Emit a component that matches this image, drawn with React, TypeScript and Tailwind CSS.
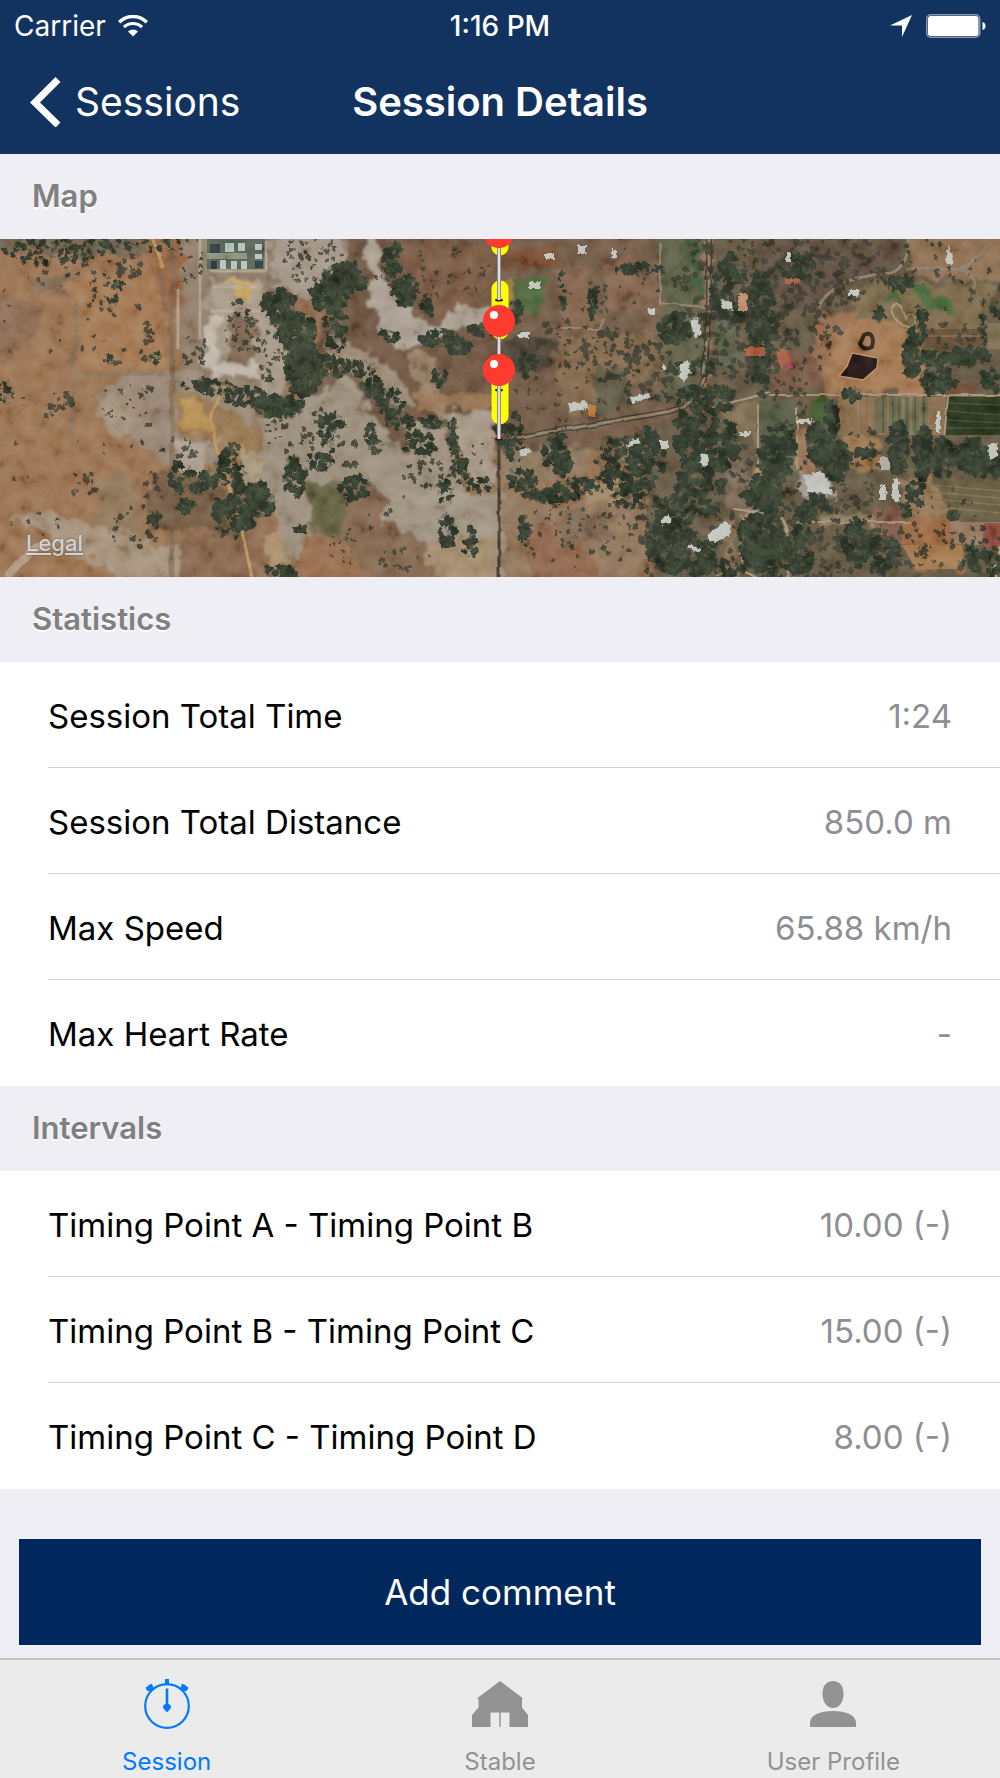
import type { ReactNode } from 'react';

type Row = { label: string; value: string };

const statistics: Row[] = [
  { label: 'Session Total Time', value: '1:24' },
  { label: 'Session Total Distance', value: '850.0 m' },
  { label: 'Max Speed', value: '65.88 km/h' },
  { label: 'Max Heart Rate', value: '-' },
];

const intervals: Row[] = [
  { label: 'Timing Point A - Timing Point B', value: '10.00 (-)' },
  { label: 'Timing Point B - Timing Point C', value: '15.00 (-)' },
  { label: 'Timing Point C - Timing Point D', value: '8.00 (-)' },
];

/* ---------- Satellite map ---------- */

function random(seed: number) {
  let s = seed;
  return () => {
    s = (s * 1664525 + 1013904223) % 4294967296;
    return s / 4294967296;
  };
}

// cx, cy, rx, ry, number of tree crowns, crown radius
type Cluster = [number, number, number, number, number, number];

function crowns(clusters: Cluster[], seed: number, spread: number, crown: number) {
  const next = random(seed);
  let d = '';
  for (const [cx, cy, rx, ry, n, size] of clusters) {
    for (let i = 0; i < n; i++) {
      const a = next() * Math.PI * 2;
      const k = Math.sqrt(next()) * spread;
      const x = cx + Math.cos(a) * rx * k;
      const y = cy + Math.sin(a) * ry * k;
      const r = size * crown * (0.55 + next() * 0.75);
      d += `M${(x - r).toFixed(1)} ${y.toFixed(1)}a${r.toFixed(1)} ${r.toFixed(1)} 0 1 0 ${(2 * r).toFixed(1)} 0a${r.toFixed(1)} ${r.toFixed(1)} 0 1 0 ${(-2 * r).toFixed(1)} 0z`;
    }
  }
  return d;
}

const sparse: Cluster[] = [
  [75, 20, 70, 26, 30, 2.2], [130, 28, 12, 12, 14, 3], [112, 60, 30, 14, 12, 2.5], [148, 92, 6, 14, 14, 2.4],
  [60, 70, 60, 50, 14, 1.8], [120, 115, 40, 12, 8, 2.2], [84, 247, 12, 14, 13, 2.3], [60, 163, 13, 9, 16, 3],
  [50, 178, 4, 4, 4, 2.3], [20, 200, 20, 50, 6, 1.6], [118, 165, 18, 22, 20, 1.4], [148, 165, 12, 20, 12, 2],
  [110, 205, 30, 20, 5, 1.8], [135, 290, 22, 22, 20, 2.4], [153, 260, 8, 26, 18, 2.8], [35, 285, 25, 12, 8, 1.6],
  [315, 20, 30, 26, 60, 2], [270, 112, 14, 30, 40, 2], [240, 88, 16, 24, 45, 2.3], [300, 190, 36, 24, 46, 2.2],
  [180, 210, 18, 12, 14, 2.4], [235, 212, 12, 8, 10, 3], [190, 20, 12, 24, 16, 2], [195, 112, 12, 16, 14, 2.4],
  [430, 35, 50, 26, 40, 2], [475, 25, 14, 26, 6, 1.5], [430, 235, 26, 12, 26, 2.4], [470, 218, 14, 20, 10, 1.8],
  [360, 212, 20, 20, 10, 3], [380, 270, 40, 20, 7, 2.4], [405, 320, 30, 10, 22, 2], [345, 305, 14, 22, 20, 1.6],
  [560, 105, 30, 25, 30, 2.6], [610, 115, 26, 26, 50, 2.8], [650, 140, 26, 34, 60, 2.8], [610, 40, 50, 40, 26, 2],
  [570, 150, 50, 40, 40, 2], [600, 280, 60, 40, 60, 2.2], [560, 300, 40, 34, 24, 2], [650, 300, 20, 40, 44, 3],
  [740, 40, 60, 50, 190, 3], [830, 30, 50, 34, 130, 2.8], [900, 20, 60, 22, 26, 2.2], [790, 100, 50, 34, 90, 2.6],
  [740, 100, 46, 40, 110, 3.4], [820, 290, 60, 46, 230, 2.8], [730, 270, 50, 60, 110, 2.6], [900, 270, 70, 40, 36, 2],
  [930, 310, 70, 26, 70, 2.6], [960, 60, 40, 46, 40, 2.4], [870, 210, 50, 20, 26, 2.4], [790, 190, 20, 60, 40, 2.4],
];

const dense: Cluster[] = [
  [45, 12, 38, 12, 60, 3.2], [105, 6, 26, 8, 30, 3], [160, 6, 22, 8, 14, 3], [88, 20, 5, 7, 6, 3.6],
  [5, 153, 8, 12, 16, 3], [119, 46, 6, 3, 8, 3], [112, 60, 6, 5, 8, 3], [108, 121, 4, 4, 5, 3], [155, 119, 6, 5, 7, 3],
  [278, 68, 16, 16, 90, 4.5], [298, 95, 16, 20, 110, 5], [304, 130, 16, 24, 140, 5], [280, 168, 22, 10, 90, 4],
  [245, 158, 22, 8, 50, 3.6], [215, 148, 20, 6, 34, 3.2], [328, 58, 18, 12, 70, 4.4], [345, 40, 20, 14, 80, 4.6],
  [335, 90, 10, 22, 40, 4.5], [332, 128, 14, 10, 30, 3.4], [360, 130, 16, 8, 26, 3.4], [372, 148, 10, 10, 30, 4],
  [390, 165, 12, 14, 32, 4], [400, 183, 14, 8, 22, 3.4], [432, 184, 16, 6, 24, 3.2], [453, 200, 4, 18, 34, 3.2],
  [460, 228, 6, 16, 28, 3.4], [478, 246, 14, 6, 20, 3], [393, 20, 8, 18, 36, 4], [405, 52, 12, 14, 54, 4.2],
  [428, 70, 5, 6, 12, 4.2], [440, 100, 18, 8, 50, 4], [458, 106, 12, 8, 34, 4], [482, 90, 12, 5, 16, 3.6],
  [390, 97, 10, 5, 18, 3.6], [440, 138, 8, 8, 18, 3.4], [420, 205, 14, 12, 30, 4], [371, 196, 6, 12, 18, 4],
  [355, 248, 14, 10, 30, 4], [447, 292, 8, 16, 30, 4], [470, 304, 6, 14, 20, 3.6], [444, 252, 8, 10, 18, 3.6],
  [182, 238, 12, 14, 20, 4.4], [208, 240, 8, 8, 18, 4.4], [230, 230, 14, 16, 30, 4.6], [252, 262, 20, 16, 100, 5],
  [222, 272, 8, 10, 28, 4.4], [186, 267, 8, 6, 18, 4], [154, 280, 6, 6, 12, 4], [226, 292, 14, 8, 16, 3.4],
  [295, 238, 10, 18, 40, 4.4], [320, 222, 12, 8, 20, 4], [280, 334, 14, 6, 26, 4], [302, 290, 6, 3, 10, 3],
  [245, 282, 10, 8, 30, 4.4], [196, 145, 14, 6, 14, 3.6], [333, 192, 12, 18, 24, 4], [197, 250, 5, 7, 12, 4],
  [508, 190, 12, 18, 44, 4], [515, 212, 10, 10, 14, 3.4], [556, 214, 12, 18, 50, 4.2], [522, 240, 14, 10, 28, 4],
  [552, 256, 26, 6, 54, 4], [578, 246, 20, 6, 34, 3.6], [564, 225, 8, 10, 20, 4], [622, 225, 24, 26, 80, 4.6],
  [648, 220, 16, 30, 70, 4.4], [632, 254, 16, 14, 36, 4], [640, 30, 22, 5, 40, 3.4], [593, 60, 4, 20, 26, 3.4],
  [562, 50, 4, 20, 14, 3], [525, 292, 5, 14, 20, 3.6], [516, 72, 6, 12, 18, 4], [526, 125, 8, 12, 18, 4],
  [675, 90, 14, 14, 56, 4.6], [700, 130, 34, 6, 30, 4], [707, 155, 28, 7, 46, 4], [730, 50, 16, 34, 60, 4.8],
  [762, 75, 12, 40, 80, 5], [762, 132, 6, 24, 34, 4.6], [712, 168, 20, 6, 30, 4], [690, 190, 14, 40, 70, 5],
  [722, 206, 16, 24, 54, 5], [775, 214, 18, 26, 90, 5], [768, 250, 12, 26, 50, 5], [700, 240, 24, 16, 42, 5],
  [762, 256, 18, 12, 60, 5], [818, 205, 10, 18, 60, 5], [836, 222, 14, 16, 66, 5], [832, 180, 6, 18, 26, 4.6],
  [852, 155, 8, 6, 18, 4], [898, 208, 8, 24, 56, 5], [922, 214, 8, 24, 50, 5], [942, 220, 10, 18, 44, 5],
  [970, 218, 16, 16, 50, 5], [990, 226, 12, 14, 28, 5], [912, 115, 7, 22, 60, 4.6], [922, 84, 4, 16, 24, 4],
  [965, 118, 22, 8, 80, 4.4], [938, 142, 16, 12, 50, 4.6], [930, 120, 12, 6, 28, 4], [995, 140, 12, 12, 30, 4.4],
  [984, 90, 2, 30, 30, 2.6], [1000, 70, 8, 8, 18, 4], [880, 75, 6, 6, 16, 3.4], [900, 44, 14, 6, 30, 4],
  [916, 254, 8, 12, 22, 4.2], [866, 214, 10, 5, 18, 3.6], [800, 30, 20, 14, 30, 4], [820, 262, 14, 8, 22, 4],
  [805, 275, 12, 8, 26, 4], [760, 300, 22, 22, 120, 5], [770, 320, 22, 18, 80, 5], [800, 310, 12, 22, 44, 5],
  [670, 300, 20, 30, 90, 5], [690, 315, 26, 20, 80, 5], [685, 265, 30, 10, 50, 4.4], [855, 305, 12, 22, 40, 5],
  [880, 315, 20, 18, 50, 4.6], [720, 330, 22, 8, 26, 4.4], [985, 325, 22, 10, 44, 4.6], [752, 292, 10, 12, 16, 4.4],
  [954, 276, 6, 4, 12, 3.6], [905, 272, 5, 5, 12, 3.4], [975, 310, 10, 8, 14, 3.4],
];

const houses =
  'M545 14h9v6h-9zM530 43h10v7h-10zM578 6h8v8h-8zM612 10h4v9h-4zM518 94h12v5h-12zM568 165l18-3 2 7-18 4zM630 158l18-4 2 5-18 5zM660 202h8v8h-8zM627 202l12-3 2 5-13 4zM518 212l12-3 2 5-12 3zM648 70h8v5h-8zM662 126h4v4h-4zM690 82l8-3 3 16-6 4zM680 126l8-5 2 12-6 10-4-6zM722 60l10 3 1 9-12-4zM786 14h5v10h-5zM848 51h12v5h-12zM740 193h10v4h-10zM798 180h14v5h-14zM702 216l5-2 2 8-4 6-5-4zM804 236l18-3 6 8 4 14-24-2zM880 246h6v14h-6zM893 240h6v22h-6zM708 295l16-12 7 2-2 12-12 6-9-1zM688 304l12 6-2 4-10-6zM662 280l8-5v8l-8 3zM936 172h4v22h-4zM988 206l9-2v14l-8 3zM946 12l3-7 4 20h-6z';

function AerialPhoto() {
  return (
    <g filter="url(#soften)">
      <rect width="1000" height="338" fill="#8e6a4d" />
      <g filter="url(#ragged)">
        {/* Bare orange paddocks on the west side */}
        <path d="M-9-9H180V150L160 348H-9Z" fill="#97704f" />
        <path d="M70 40h95v90H80Z" fill="#a07450" />
        <path d="M-9 60h50v30L-9 130Z" fill="#8a6750" />
        <path d="M-9-9h160l-8 25H60L-9 10Z" fill="#6e5f4a" />
        <path d="M30 38h40v16H34Z" fill="#7b644d" />
        <path d="M140 0h44v70h-20Z" fill="#93623f" />
        {/* Quarry and pale cleared ground */}
        <path d="M182-9H355L345 40 300 56 280 52 290 110 288 150 265 166 222 152 182 130Z" fill="#8c7965" />
        <path d="M275-5l60-5 22 40-22 22-40 6-24-16Z" fill="#a09284" />
        <path d="M208 40h52l6 30 22 26-2 48-18 20-10-32h-50Z" fill="#a39583" />
        <path d="M206 75h14v50l38 2 4 14-52-4-8-8Z" fill="#bdb3a5" />
        <path d="M228 78h28v46h-26Z" fill="#7d6550" />
        <path d="M224 41h26l4 8-9 14-6-2-3-12Z" fill="#c5a25f" />
        <path d="M95 160q10-20 45-24l40-4 60 20 20 30-10 40-80 8-25-24-30-10q-20-16-20-36Z" fill="#958270" />
        <path d="M100 165q12-18 32-12l8 30-22 16q-18-12-18-34Z" fill="#a08c77" />
        <path d="M172 150l40 10 45 30-6 50-25-10-18-30-35-4Z" fill="#947450" />
        <path d="M182 160l22 8 10 20-12 6-24-4Z" fill="#b28c50" />
        <path d="M175 205l38-2-8 28-28 2Z" fill="#aa9c8c" />
        <path d="M236 205l22 12 2 30-16-4Z" fill="#a29478" />
        <path d="M150 235h60l40 50-4 14-60-8-40 4Z" fill="#71583f" />
        <path d="M100 240l35-6 8 50 10 30-60-20Z" fill="#8d7357" />
        <path d="M14 282q20-12 40-6l60 15 40 14 30-2-2 42-70-4-60-40-14-10Z" fill="#a28d76" />
        <path d="M60 318q30-6 60 26H20Z" fill="#98704e" />
        <path d="M180 300l75-4v52h-75Z" fill="#84624a" />
        <path d="M265 294q18-8 36 6l2 26-34 2Z" fill="#a88b67" />
        <path d="M300 296l60 6 40 46H285l14-24Z" fill="#92694a" />
        {/* Dry creek bed */}
        <path d="M355-9h150v219H340l-40-60 20-50Z" fill="#6c5340" />
        <path d="M395 6h95v50l-50 22-30-24Z" fill="#765740" />
        <path d="M260 178l64-26 20-14 10 8 30 46 20 20 50 6 12 40 36-8v98H400l-50-70-12-40-30 50 4 40-26-8-6-40-20-28Z" fill="#988a78" />
        <path d="M363-9h14l4 43 12 24 24 20 20 13 10-18 22-9 24 1v18l-50 13-20 8-30 4-18-30Z" fill="#a79b8d" />
        <path d="M328 98l26 6 18 12 28 20 12 30-16 4-26-26-42-26Z" fill="#978672" />
        <path d="M412 110l18 8 12 40 6 22-20-6-12-30Z" fill="#937b63" />
        <path d="M410 154h80v16h-70Z" fill="#947050" />
        <path d="M440 174l44-4 10 14v60l-24 4-12-44Z" fill="#a29380" />
        <path d="M398 184h40l12 20-2 24-34-2Z" fill="#9b8c79" />
        <path d="M310 244l30-2 16 34-8 26-38-12Z" fill="#625f40" />
        <path d="M345 240l30 6 40 50 50 52H330l-16-46 30-4Z" fill="#80644b" />
        <path d="M390 252l60-4 40 20v40l-60-6-50-20Z" fill="#9d9080" />
        <path d="M300 300l48 4 30 44H302Z" fill="#946a4b" />
        <path d="M420 304l74-8v52h-54Z" fill="#a0896b" />
        {/* Central blocks beside the track */}
        <path d="M500-9h205v219H500Z" fill="#6d5743" />
        <path d="M503 6h54v24l-54-2Z" fill="#744b30" />
        <path d="M504 40h42v28l-18 6-16-16Z" fill="#486339" />
        <path d="M501 40h12v20h-12Z" fill="#9f7a3d" />
        <path d="M560 30l30-6 10 70-38-2Z" fill="#80604a" />
        <path d="M600 20h58v52h-50Z" fill="#80604a" />
        <path d="M560 95h95v40l-80 40-20-20Z" fill="#806549" />
        <path d="M500 98h56v30l-54 12Z" fill="#4b4335" />
        <path d="M595 125l30 4 8 40-38 8Z" fill="#5d5843" />
        <path d="M500 212l70-4 24-4-10 30-70 6-14 4Z" fill="#8a745b" />
        <path d="M502 245l34 22 24 2 60-28 34 6-4 50-10 51H501Z" fill="#8c7157" />
        <path d="M586 244l34-4v25h-36Z" fill="#9c8160" />
        <path d="M524 290l50-10 30 68h-68Z" fill="#8b644a" />
        <path d="M560 268l45 4 10 24-50 14Z" fill="#7c6350" />
        {/* Wooded acreage to the east */}
        <path d="M660-9h46v76l-46-2Z" fill="#585c43" />
        <path d="M684-9h12l8 71-10-4Z" fill="#3c5938" />
        <path d="M660 66h44v66l-24 38-20-6Z" fill="#5e5d45" />
        <path d="M712-9h300v357H650V185l60-18Z" fill="#625440" />
        <path d="M760 5h140l4 28-60 14-34 24-48-8Z" fill="#5c4c3d" />
        <path d="M715 80h20v46h-18Z" fill="#596148" />
        <path d="M772 110h44l8 36-50 8Z" fill="#765442" />
        <path d="M820 78l80-18 20 40-4 54-90 4-14-40Z" fill="#93694a" />
        <path d="M854 72l66 20 4 66-90-6-8-20Z" fill="#a07550" />
        <path d="M905-9h100v50l-90-4Z" fill="#8a6c50" />
        <path d="M860 45h130l-4 62-80-20-50-10Z" fill="#786647" />
        <path d="M915 46l34 14 2 14-20-4-14-12Z" fill="#456338" />
        <path d="M884 58l14-3 5 7-16 2Z" fill="#4c6439" />
        <path d="M812 160h22v30l-26-6Z" fill="#42552f" />
        <path d="M762 160h34v80h-34Z" fill="#535942" />
        <path d="M720 168h38v36l-30-14Z" fill="#7a6b50" />
        <path d="M796 190h20v44h-20Z" fill="#967253" />
        <path d="M842 198l36-2 4 34h-38Z" fill="#957148" />
        <path d="M728 210l20 20 6 36-26 2Z" fill="#7a6857" />
        <path d="M794 232l18-2 20 12 2 20-30-6Z" fill="#a2968a" />
        <path d="M758 228h12v14l-10 4Z" fill="#ac8350" />
        <path d="M740 270l30 2 18 40-20 10Z" fill="#8a745c" />
        <path d="M730 270l12 30-10 48h-14Z" fill="#80674e" />
        <path d="M895 240l40-2 20 40-40 6Z" fill="#917253" />
        <path d="M902 282h62v48h-50Z" fill="#956643" />
        <path d="M870 270h32v44l-22-4Z" fill="#7b5544" />
        <path d="M820 276h60v10h-60Z" fill="#8b7b5e" />
      </g>
      {/* Cultivated fields with straight edges */}
      <g>
        <path d="M838 158h108l-3 38h-105Z" fill="#85694a" />
        <path d="M874 158h54v36h-54Z" fill="#6c6549" />
        <path d="M883 158v36M893 158v36M899 158v36M907 158v38M915 158v38M924 158v38" stroke="#4b5843" strokeWidth="2" />
        <path d="M888 158v36M903 158v36M911 158v36M920 158v36M870 158v36M858 158v36" stroke="#907b5b" strokeWidth="1" />
        <path d="M948 158h52v38h-54Z" fill="#26331f" />
        <path d="M948 164l52 2M948 172l52 4M947 181l53 3M947 189h53" stroke="#42532f" strokeWidth="1" />
        <path d="M926 89h56v22l-56-2Z" fill="#5e4c33" />
        <path d="M922 89h60M928 97h52" stroke="#805e43" strokeWidth="2" />
        <path d="M988 84h12v26h-12Z" fill="#76694a" />
        <path d="M934 240h66v42l-48-4Z" fill="#62583c" />
        <path d="M932 246l68 6M932 253l68 6M934 260l66 6M940 268l60 6" stroke="#7b6b4b" strokeWidth="1.4" />
        <path d="M902 283h48v22h-48Z" fill="#99663f" />
        <path d="M950 283h50v24l-46-2Z" fill="#8f7158" />
        <path d="M984 284h16v24h-18Z" fill="#8d5040" />
        <path d="M902 306h60v24h-46Z" fill="#a07448" />
        <path d="M950 144h30l-6 12h-28Z" fill="#6b4936" />
        <path d="M207 0h58v30h-58Z" fill="#525e50" />
        <path d="M207 14h40v6h-40z" fill="#8a8f7c" />
        <path d="M225 4h9v9h-9zM238 4h7v8h-7zM220 21h6v9h-6zM231 22h6v8h-6zM241 22h6v8h-6zM255 5h7v6h-7zM255 15h7v5h-7z" fill="#b3c1c0" />
        <path d="M210 5h10v9h-10zM211 22h6v8h-6zM255 22h8v7h-8z" fill="#26363b" />
        <path d="M200 0v100M210 32h56M266 2v30M178 50v60M210 72h50M213 48h45" fill="none" stroke="#b7aa97" strokeWidth="3" opacity=".7" />
      </g>
      {/* Tracks and roads */}
      <g fill="none" strokeLinecap="round" filter="url(#wobble)">
        <path d="M76 60l-2 75h90M74 135l-2 60" stroke="#83705f" strokeWidth="4" opacity=".65" />
        <path d="M172 0v338M160 30l5 40" stroke="#74604c" strokeWidth="5" opacity=".6" />
        <path d="M153 0l10 28M226 142l-16 38 10 40 18 55 14 63" stroke="#b8905c" strokeWidth="3" />
        <path d="M320 138l22-12M248 152l14 8" stroke="#9c8a66" strokeWidth="3" />
        <path d="M10 335l22-24 14-6" stroke="#b9a590" strokeWidth="8" opacity=".7" />
        <path d="M499 0v338" stroke="#40382c" strokeWidth="3" />
        <path d="M502 201q90-15 158-27 34-4 44-34l5-70V0" stroke="#403629" strokeWidth="6" />
        <path d="M502 201q90-15 158-27 34-4 44-34l5-70V0" stroke="#85765f" strokeWidth="3" />
        <path d="M818 72q2-16 30-30 28-8 46-9 16-10 14-33M908 30q40-2 50 0 14-4 28-22M960 30q18 8 14 18" stroke="#8a7966" strokeWidth="3" />
        <path d="M770 156h230M790 283h120M713 168l56-14M758 166v70M797 170v60M948 158l-4 40" stroke="#a08b6e" strokeWidth="2" />
        <path d="M788 337v-42q-4-24-22-24-26 0-26 26 0 16 4 30" stroke="#a08c73" strokeWidth="3" />
        <path d="M716 337q20-12 40 1M735 270l28 4" stroke="#ab967b" strokeWidth="2" />
        <path d="M660 64l44 4M660 5v60M562 90h36l6-10" stroke="#8d7d67" strokeWidth="2" />
        <path d="M892 70q4-8 10-2l4 12q4-10 10 0 0 10-8 8-12-2-16-18Z" stroke="#a38f6d" strokeWidth="2" />
        <path d="M1000 310l-6 28" stroke="#b6a17f" strokeWidth="5" />
      </g>
      <g filter="url(#leafy)">
        <path d={crowns(sparse, 11, 1.1, 0.9)} fill="#35372a" opacity=".85" />
        <path d={crowns(dense, 29, 1.1, 0.72)} fill="#2b3327" />
        <path d={crowns(dense, 87, 1.15, 0.4)} fill="#404b38" opacity=".5" />
      </g>
      <path d="M852 114l26 5-1 10-14 12-24-4 8-10Z" fill="#211216" stroke="#b58f69" strokeWidth="1.5" />
      <path d="M864 96q8-4 9 6l-1 6q-8 4-12-3Z" fill="none" stroke="#2b211c" strokeWidth="4" />
      <path d="M834 166l4 18" stroke="#20221c" strokeWidth="5" />
      <g filter="url(#leafy)">
        <path d={houses} fill="#bfc1ba" />
        <path d="M738 54h9v18h-9z" fill="#bd8464" />
        <path d="M745 108h20v9h-20zM776 112l10-2 4 14-10 6zM784 39h16v6h-16zM817 86h5v8h-5z" fill="#a65b42" />
        <path d="M788 120h4v10h-4z" fill="#b44357" />
        <path d="M588 166h8v12h-8z" fill="#b57c38" />
        <path d="M880 218h10v13h-10z" fill="#a9a49a" />
      </g>
    </g>
  );
}

function Pin({ x, y, tip }: { x: number; y: number; tip: number }) {
  return (
    <g>
      <ellipse cx={x} cy={tip} rx="4" ry="1.5" fill="#222" />
      <path d={`M${x} ${y}V${tip}`} stroke="#8c8c91" strokeWidth="4" />
      <path d={`M${x} ${y}V${tip}`} stroke="#dcdce2" strokeWidth="2" />
      <circle cx={x} cy={y} r="16" fill="#ff3b30" />
      <circle cx={x - 5} cy={y - 6} r="4" fill="#fff" />
    </g>
  );
}

function SessionMap() {
  return (
    <div className="relative">
      <svg
        role="img"
        aria-label="Satellite map of the session track"
        viewBox="0 0 1000 338"
        preserveAspectRatio="xMidYMid slice"
        className="block h-[338px] w-full"
      >
        <defs>
          <filter id="ragged" x="-10" y="-10" width="1020" height="358" filterUnits="userSpaceOnUse">
            <feTurbulence type="fractalNoise" baseFrequency="0.07" numOctaves="5" seed="4" />
            <feDisplacementMap in="SourceGraphic" scale="22" xChannelSelector="R" yChannelSelector="G" />
            <feGaussianBlur stdDeviation="1.2" />
          </filter>
          <filter id="leafy" x="0" y="0" width="1000" height="338" filterUnits="userSpaceOnUse">
            <feTurbulence type="fractalNoise" baseFrequency="0.22" numOctaves="2" seed="15" />
            <feDisplacementMap in="SourceGraphic" scale="6" xChannelSelector="R" yChannelSelector="G" />
          </filter>
          <filter id="wobble" x="0" y="0" width="1000" height="338" filterUnits="userSpaceOnUse">
            <feTurbulence type="fractalNoise" baseFrequency="0.05" numOctaves="2" seed="8" />
            <feDisplacementMap in="SourceGraphic" scale="4" xChannelSelector="R" yChannelSelector="G" />
          </filter>
          <filter id="soften" x="0" y="0" width="1000" height="338" filterUnits="userSpaceOnUse">
            <feGaussianBlur stdDeviation="0.7" />
          </filter>
          <filter id="grain" x="0" y="0" width="100%" height="100%">
            <feTurbulence type="fractalNoise" baseFrequency="0.06" numOctaves="5" seed="21" />
            <feColorMatrix values="1.6 0 0 0 -0.3  1.6 0 0 0 -0.3  1.6 0 0 0 -0.3  0 0 0 0 1" />
          </filter>
        </defs>
        <AerialPhoto />
        <rect width="1000" height="338" filter="url(#grain)" className="opacity-35 mix-blend-soft-light" />
        <path d="M500-10V8M500 50V92M500 131V177" stroke="#ff0" strokeWidth="17" strokeLinecap="round" />
        <path d="M491 199h18" stroke="#d03a30" strokeWidth="1" />
        <Pin x={499} y={-7} tip={61} />
        <Pin x={499} y={82} tip={151} />
        <Pin x={499} y={131} tip={200} />
      </svg>
      <a
        href="#legal"
        className="absolute bottom-5 left-[26px] text-[22px] leading-7 font-medium text-white/70 underline decoration-2 underline-offset-2 [text-shadow:0_0_2px_#555]"
      >
        Legal
      </a>
    </div>
  );
}

/* ---------- Lists ---------- */

function Section({ title, children }: { title: string; children: ReactNode }) {
  return (
    <section>
      <h2 className="flex h-[85px] items-center px-8 text-[31px] font-semibold text-[#808080] [text-shadow:0_2px_0_#fff]">
        {title}
      </h2>
      {children}
    </section>
  );
}

function RowList({ rows }: { rows: Row[] }) {
  return (
    <dl className="bg-white pl-12">
      {rows.map((row) => (
        <div
          key={row.label}
          className="flex h-[106px] items-center justify-between border-b border-[#d2d1d6] pt-1 pr-12 text-[33px] last:border-transparent"
        >
          <dt className="text-black">{row.label}</dt>
          <dd className="text-[#8e8e93]">{row.value}</dd>
        </div>
      ))}
    </dl>
  );
}

/* ---------- Icons ---------- */

function WifiIcon() {
  return (
    <svg viewBox="0 0 30 22" className="h-[22px] w-[30px]" aria-hidden="true">
      <path d="M1.2 7.2a19.5 19.5 0 0 1 27.6 0" fill="none" stroke="#fff" strokeWidth="3.4" />
      <path d="M6 12.2a12.8 12.8 0 0 1 18 0" fill="none" stroke="#fff" strokeWidth="3.2" />
      <path d="M10 16.4a7.2 7.2 0 0 1 10 0L15 21.6Z" fill="#fff" />
    </svg>
  );
}

function StopwatchIcon() {
  return (
    <svg viewBox="0 0 48 52" className="h-[52px] w-12" aria-hidden="true">
      <circle cx="24" cy="28" r="21.8" fill="none" stroke="currentColor" strokeWidth="2.2" />
      <path d="M24 1v6" stroke="currentColor" strokeWidth="4" />
      <path d="M24 10.5v20" stroke="currentColor" strokeWidth="2.6" />
      <path d="M24 25.500l3.500 1.500.500 3L24 34.500 20 30l.500-3Z" fill="currentColor" />
      <path d="M3.500 11.500l5.500-3.500M39 8l5.500 3.500M7 6.500l2 6M41 6.500l-2 6" stroke="currentColor" strokeWidth="4.200" />
    </svg>
  );
}

function StableIcon() {
  return (
    <svg viewBox="0 0 56 46" className="h-[46px] w-14" aria-hidden="true">
      <path
        d="M28 0 50.500 17v1H50v8.500l6 7.500V46H37.500V31.500h-19V46H0V34l6.500-7.500V18H5.500v-1ZM27.300 31.500h1.400V46h-1.400Z"
        fill="currentColor"
      />
    </svg>
  );
}

function ProfileIcon() {
  return (
    <svg viewBox="0 0 46 46" className="h-[46px] w-[46px]" aria-hidden="true">
      <path d="M23 0c6.500 0 10.500 5 10.500 13S29 27 23 27s-10.500-6-10.500-14S16.500 0 23 0Z" fill="currentColor" />
      <path d="M0 46v-4c0-8 10-12 23-12s23 4 23 12v4Z" fill="currentColor" />
    </svg>
  );
}

function Tab({ label, icon, active = false }: { label: string; icon: ReactNode; active?: boolean }) {
  return (
    <a
      href={`#${label.toLowerCase().replace(' ', '-')}`}
      aria-current={active ? 'page' : undefined}
      className={`flex flex-col items-center justify-between pt-[18px] pb-0.5 ${active ? 'text-[#007aff]' : 'text-[#929292]'}`}
    >
      <span className="flex h-[52px] items-center">{icon}</span>
      <span className="text-2xl leading-7">{label}</span>
    </a>
  );
}

export default function App() {
  return (
    <div className="flex min-h-screen flex-col bg-[#efeef4] font-['Inter',sans-serif]">
      <header className="bg-[#12335f] text-white">
        <div className="grid h-[52px] grid-cols-3 items-center px-3.5 text-[28px]">
          <div className="flex items-center gap-3">
            <span>Carrier</span>
            <WifiIcon />
          </div>
          <div className="text-center font-medium">1:16 PM</div>
          <div className="flex items-center justify-end gap-3.5">
            <svg viewBox="0 0 22 22" className="size-[22px]" aria-hidden="true">
              <path d="M22 0 12 22V10.500H0Z" fill="#fff" />
            </svg>
            <svg viewBox="0 0 60 24" className="h-6 w-[60px]" aria-hidden="true">
              <rect x=".75" y=".75" width="53" height="22.500" rx="4" fill="none" stroke="#8799b0" strokeWidth="1.500" />
              <rect x="2" y="2" width="50.500" height="20" rx="2.500" fill="#fff" />
              <path d="M56.500 8q3 .8 3 4t-3 4Z" fill="#fff" />
            </svg>
          </div>
        </div>
        <div className="grid h-[102px] grid-cols-[1fr_auto_1fr] items-center px-[30px] pb-0.5">
          <a href="#sessions" className="flex items-center gap-3.5 text-[39px]">
            <svg viewBox="0 0 31 50" className="h-[50px] w-[31px]" aria-hidden="true">
              <path d="M28 2.500 5 25.500 28 48" fill="none" stroke="#fff" strokeWidth="7" />
            </svg>
            Sessions
          </a>
          <h1 className="text-[40px] font-semibold">Session Details</h1>
        </div>
      </header>

      <main className="flex flex-1 flex-col">
        <Section title="Map">
          <SessionMap />
        </Section>
        <Section title="Statistics">
          <RowList rows={statistics} />
        </Section>
        <Section title="Intervals">
          <RowList rows={intervals} />
        </Section>
        <div className="mt-auto px-[19px] pt-12 pb-[13px]">
          <button type="button" className="h-[106px] w-full bg-[#00285c] text-[35px] text-white">
            Add comment
          </button>
        </div>
      </main>

      <nav aria-label="Main" className="grid h-[120px] grid-cols-3 border-t-2 border-[#c4c4c8] bg-[#ebebeb]">
        <Tab label="Session" icon={<StopwatchIcon />} active />
        <Tab label="Stable" icon={<StableIcon />} />
        <Tab label="User Profile" icon={<ProfileIcon />} />
      </nav>
    </div>
  );
}
